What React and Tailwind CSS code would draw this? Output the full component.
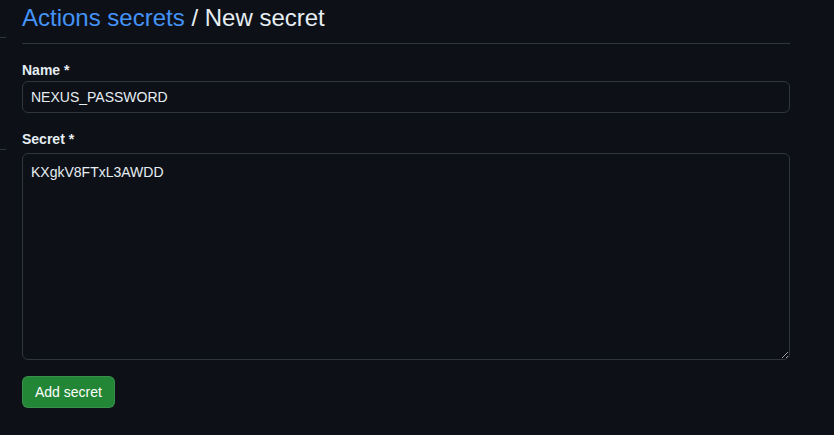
import React, { useState } from "react";

const NewSecret = () => {
  const [name, setName] = useState("NEXUS_PASSWORD");
  const [secret, setSecret] = useState("KXgkV8FTxL3AWDD");

  return (
    <div
      className="bg-[#0d1117] min-h-screen text-[#e6edf3] flex"
      style={{ fontFamily: '"Liberation Sans", Arial, sans-serif' }}
    >
      {/* what is left of the settings sidebar */}
      <div className="w-[6px] shrink-0">
        <div className="h-[38px] border-b border-[#30363d]" />
        <div className="h-[112px] border-b border-[#30363d]" />
      </div>
      <div className="ml-[16px] w-[768px]">
        <div className="pt-[2px] pb-[9px] border-b border-[#30363d]">
          <h1 className="text-2xl leading-8 font-normal">
            <a href="#" className="text-[#4493f8]">
              Actions secrets
            </a>{" "}
            / New secret
          </h1>
        </div>
        <form className="mt-4" onSubmit={(e) => e.preventDefault()}>
          <div className="mb-4">
            <label className="block text-sm leading-5 font-bold mb-px">
              Name *
            </label>
            <input
              type="text"
              value={name}
              onChange={(e) => setName(e.target.value)}
              className="block w-full h-8 px-2 text-sm leading-5 bg-[#0d1117] text-[#e6edf3] border border-[#30363d] rounded-md outline-none"
            />
          </div>
          <div className="mb-4">
            <label className="block text-sm leading-5 font-bold mb-1">
              Secret *
            </label>
            <textarea
              value={secret}
              onChange={(e) => setSecret(e.target.value)}
              className="block w-full h-[207px] px-2 py-2 text-sm leading-5 bg-[#0d1117] text-[#e6edf3] border border-[#30363d] rounded-md outline-none"
            />
          </div>
          <button
            type="submit"
            className="h-8 px-3 text-sm leading-5 text-white bg-[#238636] border border-[rgba(240,246,252,0.1)] rounded-md"
          >
            Add secret
          </button>
        </form>
      </div>
    </div>
  );
};

export default function App() {
  return <NewSecret />;
}
